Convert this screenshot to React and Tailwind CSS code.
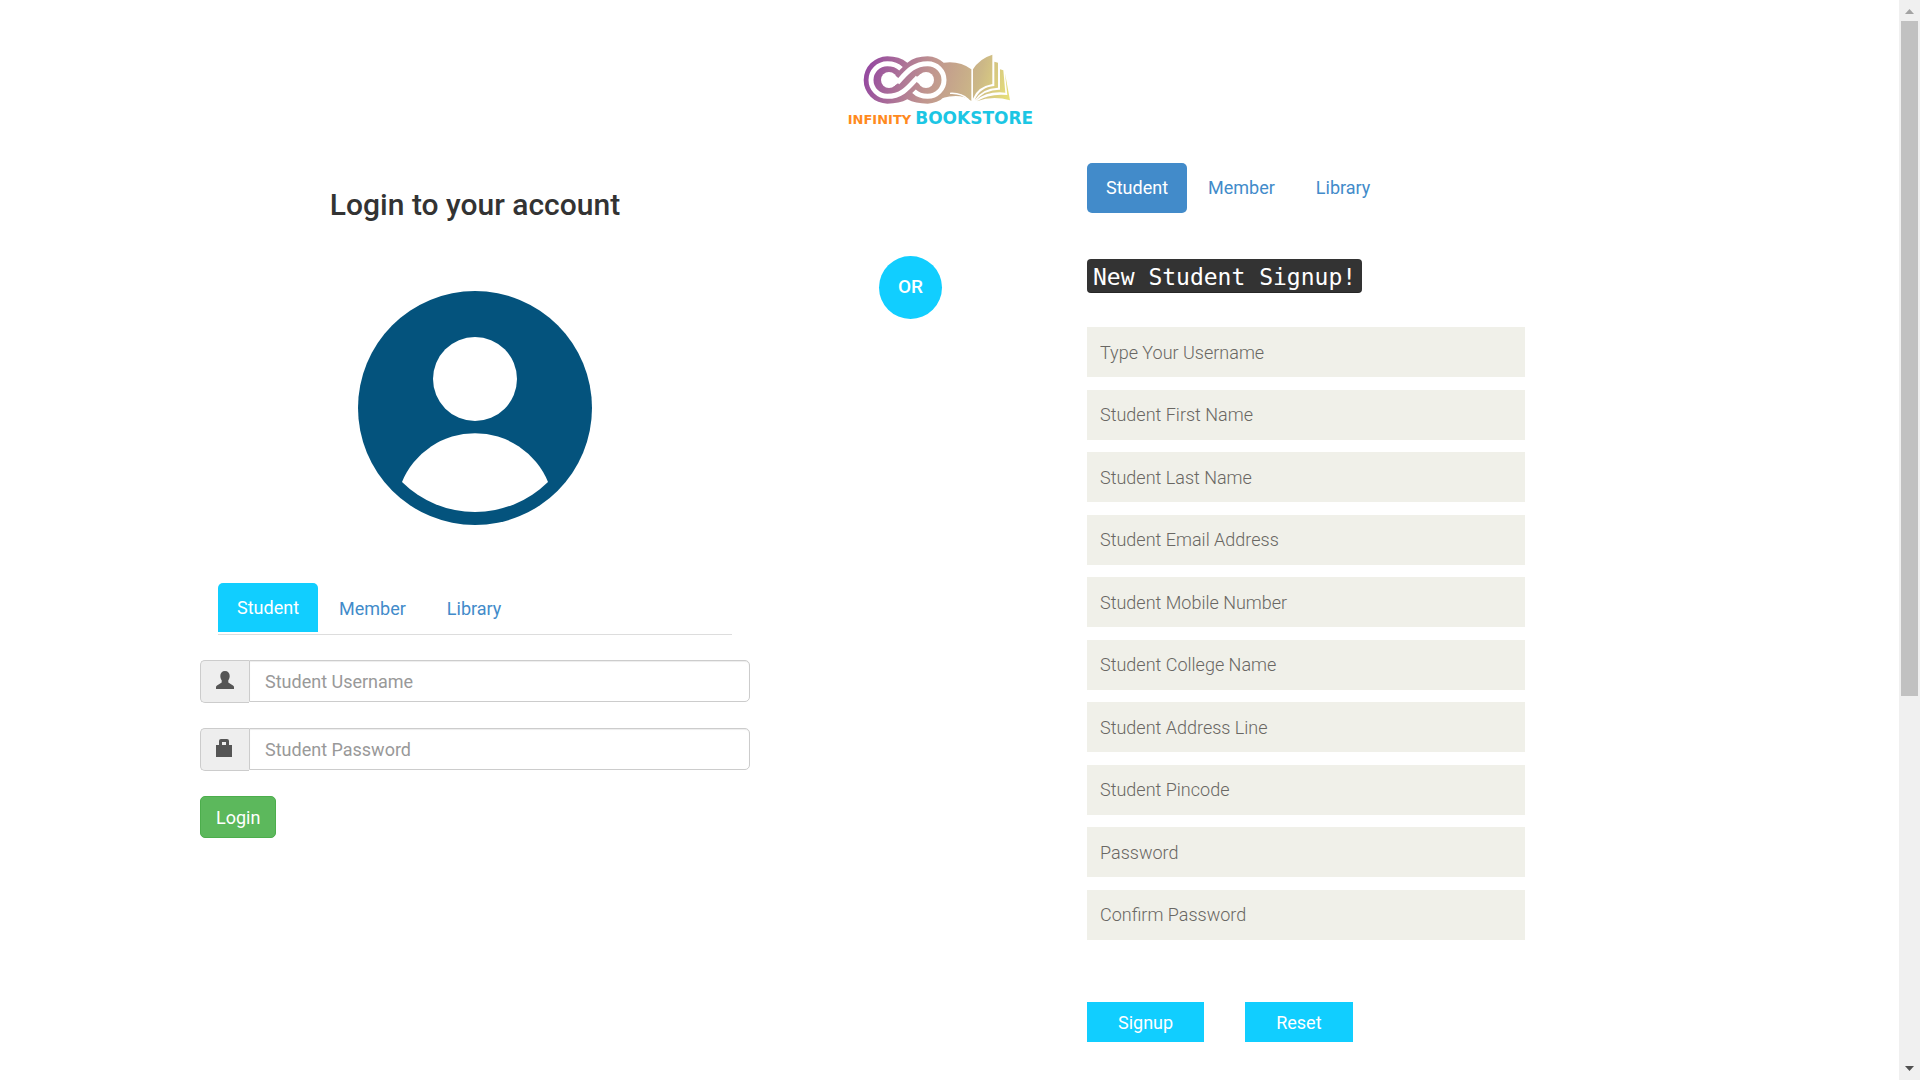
import React from 'react';

function InfinityMark() {
  return (
    <svg viewBox="94 42 444 150" className="ml-[14px] h-[50px] w-[148px]" aria-hidden="true">
      <defs>
        <linearGradient id="ink" gradientUnits="userSpaceOnUse" x1="120" y1="60" x2="540" y2="180">
          <stop offset="0" stopColor="#964ba0" />
          <stop offset="0.42" stopColor="#c0958f" />
          <stop offset="0.75" stopColor="#ccb887" />
          <stop offset="1" stopColor="#e8e277" />
        </linearGradient>
      </defs>
      <g fill="url(#ink)">
        <path d="M340 68 Q388 62 422 88 V183 Q392 158 335 174 Z" />
        <path d="M427 88 Q446 56 485 44 V132 Q440 140 427 176 Z" />
        <path d="M491 65 L502 68 V143 Q455 145 432 180 Q448 142 491 138 Z" />
        <path d="M508 88 L518 91 L524 158 Q470 152 434 182 Q465 148 508 149 Z" />
        <path d="M523 100 L538 181 Q486 166 438 184 Q475 160 530 165 Z" />
        <path d="M170 49 Q206 49 230 68 Q254 49 291 49 A71 71 0 0 1 291 191 Q254 191 230 178 Q206 191 170 191 A71 71 0 0 1 170 49 Z" />
      </g>
      <path d="M358 160 Q392 158 414 179" fill="none" stroke="#fff" strokeWidth="4" />
      <g fill="none" stroke="#fff" strokeWidth="15">
        <path d="M200 128 C226 100 246 71 291 71 A49 49 0 0 1 291 169 C275 169 260 164 250 154" />
        <path d="M261 112 C235 140 215 169 170 169 A49 49 0 0 1 170 71 C186 71 201 76 211 86" />
      </g>
      <g fill="#fff">
        <circle cx="175" cy="120" r="24" />
        <circle cx="286" cy="120" r="24" />
        <path d="M190 104 L208 118 L202 130 L190 138 Z M271 102 L259 110 L253 122 L271 136 Z" />
      </g>
    </svg>
  );
}

function Logo() {
  return (
    <div className="flex flex-col items-start">
      <InfinityMark />
      <div className="mt-1 flex items-baseline gap-1 font-['DejaVu_Sans'] font-bold leading-5">
        <span className="text-[13px] text-[#ff8a1e]">INFINITY</span>
        <span className="text-[17px] text-[#1cc6e4]">BOOKSTORE</span>
      </div>
    </div>
  );
}

function Avatar() {
  return (
    <svg viewBox="0 0 234 234" className="mx-auto size-[234px]" aria-hidden="true">
      <circle cx="117" cy="117" r="117" fill="#04537d" />
      <circle cx="117" cy="88" r="42" fill="#fff" />
      <path d="M44 191 A79 79 0 0 1 190 191 A104 104 0 0 1 44 191 Z" fill="#fff" />
    </svg>
  );
}

function UserIcon() {
  return (
    <svg viewBox="0 0 18 18" className="size-[18px] fill-[#555]" aria-hidden="true">
      <path d="M9 0C6 0 4.300 2 4.300 5C4.300 7 5 8.200 5.700 9.200V11.500L1 14.500Q0 15.200 0 16V18H18V16Q18 15.200 17 14.500L12.300 11.500V9.200C13 8.200 13.700 7 13.700 5C13.700 2 12 0 9 0Z" />
    </svg>
  );
}

function LockIcon() {
  return (
    <svg viewBox="0 0 18 18" className="size-[18px] fill-[#555]" aria-hidden="true">
      <path fillRule="evenodd" d="M3 6V2Q3 0 5 0H11Q13 0 13 2V6H16V18H0V6ZM6 6H10V3H6Z" />
    </svg>
  );
}

function IconField({ id, label, type, icon }) {
  return (
    <div className="mb-[25px] flex">
      <label htmlFor={id} aria-label={label} className="flex h-[43px] w-[49px] items-center justify-center rounded-l-[5px] border border-r-0 border-[#ccc] bg-[#eee] pb-1">
        {icon}
      </label>
      <input id={id} type={type} placeholder={label} className="h-[42px] min-w-0 flex-1 rounded-r-[5px] border border-[#ccc] bg-white px-[15px] shadow-[inset_0_1px_1px_rgba(0,0,0,0.075)] outline-none placeholder:text-[#999]" />
    </div>
  );
}

const signupFields = [
  ['username', 'Type Your Username', 'text'],
  ['first', 'Student First Name', 'text'],
  ['last', 'Student Last Name', 'text'],
  ['email', 'Student Email Address', 'email'],
  ['mobile', 'Student Mobile Number', 'tel'],
  ['college', 'Student College Name', 'text'],
  ['address', 'Student Address Line', 'text'],
  ['pincode', 'Student Pincode', 'text'],
  ['password', 'Password', 'password'],
  ['confirm', 'Confirm Password', 'password'],
];

function LoginPanel() {
  return (
    <section className="w-[550px] pt-[23px]">
      <h2 className="text-center text-[30px] font-medium leading-[38px] text-[#333]">Login to your account</h2>
      <div className="pt-[67px]">
        <Avatar />
      </div>
      <nav className="mx-[18px] mt-[58px] flex items-start border-b border-[#ddd] pb-px leading-[25px] text-[#428bca]">
        <a href="#student" className="mr-[2px] rounded-t-[5px] bg-[#11ceff] px-[19px] py-3 text-white">Student</a>
        <a href="#member" className="mr-[2px] px-[19px] pb-3 pt-[13px]">Member</a>
        <a href="#library" className="px-5 pb-3 pt-[13px]">Library</a>
      </nav>
      <form className="pt-[25px]">
        <IconField id="login-username" label="Student Username" type="text" icon={<UserIcon />} />
        <IconField id="login-password" label="Student Password" type="password" icon={<LockIcon />} />
        <button type="button" className="h-[42px] rounded-[5px] border border-[#4cae4c] bg-[#5cb85c] px-[15px] text-white">Login</button>
      </form>
    </section>
  );
}

function SignupPanel() {
  return (
    <section className="w-[438px]">
      <nav className="flex leading-[26px] text-[#428bca]">
        <a href="#student-signup" className="mr-[2px] rounded-[5px] bg-[#428bca] px-[19px] py-3 text-white">Student</a>
        <a href="#member-signup" className="mr-[2px] px-[19px] py-3">Member</a>
        <a href="#library-signup" className="px-5 py-3">Library</a>
      </nav>
      <h2 className="mt-[46px] flex">
        <kbd className="rounded bg-[#333] px-[6px] pb-px pt-[3px] font-['DejaVu_Sans_Mono',monospace] text-[23px] font-normal leading-[30px] text-white shadow-[inset_0_-1px_0_rgba(0,0,0,0.25)]">New Student Signup!</kbd>
      </h2>
      <form>
        <div className="mt-[34px] flex min-h-[613px] flex-col justify-between">
          {signupFields.map(([id, label, type]) => (
            <input key={id} id={id} type={type} aria-label={label} placeholder={label} className="h-[50px] w-full bg-[#f0f0e9] px-[13px] font-light outline-none placeholder:text-[#696763]" />
          ))}
        </div>
        <div className="mt-[62px] flex gap-[41px]">
          <button type="button" className="h-10 bg-[#11ceff] px-[31px] text-white">Signup</button>
          <button type="reset" className="h-10 bg-[#11ceff] px-[31px] text-white">Reset</button>
        </div>
      </form>
    </section>
  );
}

function ScrollBar() {
  return (
    <div className="flex w-[21px] shrink-0 flex-col items-center bg-[#f0f0f0]" aria-hidden="true">
      <svg viewBox="0 0 21 21" className="size-[21px] fill-[#a3a3a3]"><path d="M6 14L10.500 9L15 14Z" /></svg>
      <div className="h-[675px] w-[17px] bg-[#c1c1c1]" />
      <svg viewBox="0 0 21 21" className="mt-auto size-[21px] fill-[#505050]"><path d="M6 7L10.500 12L15 7Z" /></svg>
    </div>
  );
}

export default function App() {
  return (
    <div className="flex h-screen overflow-hidden bg-white font-[Roboto,sans-serif] text-[18px]">
      <main className="min-w-0 flex-1">
        <div className="mx-auto max-w-[1499px]">
          <header className="flex h-[163px] justify-center pr-[18px] pt-[54px]">
            <Logo />
          </header>
          <div className="flex items-start">
            <LoginPanel />
            <div className="ml-[129px] mr-[145px] mt-[93px] flex size-[63px] items-center justify-center rounded-full bg-[#11ceff] text-[19px] font-medium text-white">OR</div>
            <SignupPanel />
          </div>
        </div>
      </main>
      <ScrollBar />
    </div>
  );
}
